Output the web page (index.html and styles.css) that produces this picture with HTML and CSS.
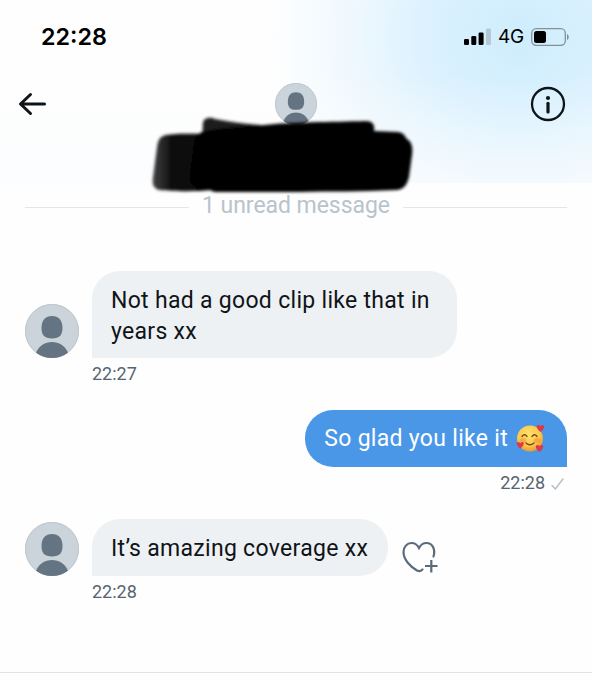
FILE: index.html
```html
<!DOCTYPE html>
<html lang="en">
<head>
    <meta charset="UTF-8">
    <meta name="viewport" content="width=device-width, initial-scale=1.0">
    <title>Messages</title>
    <link rel="stylesheet" href="styles.css">
</head>
<body>
    <svg class="symbols" width="0" height="0">
        <symbol id="person" viewBox="0 0 54 54">
            <circle cx="27" cy="27" r="27" fill="#ccd4db"/>
            <circle cx="27" cy="27" r="26.5" fill="none" stroke="#bcc6ce"/>
            <path d="M27 12C33.5 12 37.5 16 37.5 24C37.5 31 34.5 34.5 27 34.5S16.5 31 16.5 24C16.5 16 20.5 12 27 12Z" fill="#657482"/>
            <path d="M11 48.7C14 41.5 20 38 27 38S40 41.5 43 48.7A27 27 0 0 1 11 48.7Z" fill="#657482"/>
        </symbol>
        <symbol id="heart" viewBox="0 0 24 24">
            <path d="M12 21C7 17 2 12.5 2 7.5C2 2.5 8.5 1 12 6.2C15.5 1 22 2.5 22 7.5C22 12.5 17 17 12 21Z" fill="#df3949"/>
        </symbol>
    </svg>

    <header class="header">
        <div class="status-bar">
            <span class="clock">22:28</span>
            <div class="status-icons">
                <svg class="signal" width="27" height="17" viewBox="0 0 27 17">
                    <rect x="0" y="11" width="5" height="6" rx="1.3"/>
                    <rect x="7.3" y="8" width="5" height="9" rx="1.3"/>
                    <rect x="14.6" y="4.5" width="5" height="12.5" rx="1.3"/>
                    <rect x="22" y="0.5" width="5" height="16.5" rx="1.3" fill="#b5c8d4"/>
                </svg>
                <span class="network">4G</span>
                <svg class="battery" width="39" height="18" viewBox="0 0 39 18">
                    <rect x="0.7" y="0.7" width="33.6" height="16.6" rx="4.5" fill="none" stroke="#82929b" stroke-width="1.3"/>
                    <rect x="3" y="3" width="12" height="12" rx="2.5"/>
                    <path d="M36 6C38.3 7 38.3 11 36 12Z" fill="#82929b"/>
                </svg>
            </div>
        </div>
        <div class="nav">
            <svg class="back" width="29" height="24" viewBox="0 0 29 24" fill="none" stroke="#0f1419" stroke-width="3" stroke-linecap="round" stroke-linejoin="round">
                <path d="M26.5 12H3M12.5 2.500L2.500 12L12.500 21.500"/>
            </svg>
            <svg class="avatar-small" width="42" height="42"><use href="#person"/></svg>
            <svg class="info" width="36" height="36" viewBox="0 0 36 36">
                <circle cx="18" cy="18" r="16" fill="none" stroke="#0f1419" stroke-width="2.3"/>
                <circle cx="18" cy="12" r="2.1" fill="#0f1419"/>
                <path d="M18 17.3V26" stroke="#0f1419" stroke-width="3.2" stroke-linecap="round"/>
            </svg>
        </div>
        <!-- contact name, blacked out -->
        <svg class="redaction" width="270" height="84" viewBox="148 114 270 84">
            <defs>
                <filter id="soft" x="-10%" y="-10%" width="120%" height="120%">
                    <feGaussianBlur stdDeviation="1.5"/>
                </filter>
                <linearGradient id="ink" x1="0" x2="1">
                    <stop offset="0" stop-color="#444"/>
                    <stop offset="0.3" stop-color="#111"/>
                    <stop offset="1" stop-color="#000"/>
                </linearGradient>
            </defs>
            <g filter="url(#soft)">
                <path d="M163 136C172 133 190 134 206 134L212 190C192 192 171 191 159 190C153 188 152 184 153 177L157 147C158 141 159 138 163 136Z" fill="url(#ink)"/>
                <path d="M203 122C205 117 211 117 215 119C230 122 246 124 260 125L260 140H202Z" fill="#1c1c1c"/>
                <path d="M202 132C216 128 243 126 265 125C290 122 330 122 366 121C373 121 375 125 374 131L398 132C405 133 405 137 407 139C412 142 413 148 412 155L409 177C407 184 405 189 397 190C360 192 330 191 300 192L216 192C210 192 211 188 204 187C193 187 189 184 190 176L194 145C195 137 198 134 202 132Z"/>
            </g>
        </svg>
    </header>

    <main class="chat">
        <div class="unread"><span>1 unread message</span></div>

        <div class="message">
            <svg class="avatar" width="54" height="54"><use href="#person"/></svg>
            <p class="bubble wide">Not had a good clip like that in years xx</p>
        </div>
        <div class="time">22:27</div>

        <div class="message sent">
            <p class="bubble">
                <span>So glad you like it</span>
                <svg class="emoji" width="29" height="29" viewBox="0 0 29 29" role="img" aria-label="🥰">
                    <defs>
                        <radialGradient id="face" cx="0.45" cy="0.35" r="0.65">
                            <stop offset="0" stop-color="#ffe36c"/>
                            <stop offset="0.65" stop-color="#fbc94b"/>
                            <stop offset="1" stop-color="#e99a32"/>
                        </radialGradient>
                    </defs>
                    <circle cx="14" cy="14.5" r="13" fill="url(#face)"/>
                    <ellipse cx="7" cy="16.5" rx="3.5" ry="2.5" fill="#f08a3c" opacity="0.5"/>
                    <ellipse cx="21" cy="16.5" rx="3.5" ry="2.5" fill="#f08a3c" opacity="0.5"/>
                    <path d="M6 12.5Q8.500 9 11 12.5M16 12.5Q18.500 9 21 12.5M10 19Q14 22.500 18 19" fill="none" stroke="#7a431b" stroke-width="1.3" stroke-linecap="round"/>
                    <use href="#heart" x="20" y="0" width="9" height="9"/>
                    <use href="#heart" x="0" y="17" width="8.5" height="8.5"/>
                    <use href="#heart" x="19" y="20" width="9" height="9"/>
                </svg>
            </p>
        </div>
        <div class="time sent">
            22:28
            <svg width="13" height="12" viewBox="0 0 13 12" fill="none" stroke="#b4bec6" stroke-width="1.4" stroke-linecap="round">
                <path d="M1 7.500L4.300 11L12 1"/>
            </svg>
        </div>

        <div class="message">
            <svg class="avatar" width="54" height="54"><use href="#person"/></svg>
            <p class="bubble">It’s amazing coverage xx</p>
            <svg class="react" width="37" height="33" viewBox="0 0 37 33" fill="none" stroke="#5b6b7a" stroke-width="2.2" stroke-linecap="round">
                <path d="M31.500 15.500C34 7 29.500 2 24.500 2C21 2 18.500 4 17 7C15.500 4 13 2 9.500 2C5 2 1.500 6 1.500 11C1.500 19 9 26 15 29.500C17 30.500 19 30 20.500 28.500"/>
                <path d="M23 25H35.500M29.300 19V31.500" stroke-linecap="butt"/>
            </svg>
        </div>
        <div class="time">22:28</div>
    </main>
</body>
</html>
```

FILE: styles.css
```css
* {
    margin: 0;
    padding: 0;
    box-sizing: border-box;
}

body {
    display: flex;
    flex-direction: column;
    height: 680px;
    background: #fefefe;
    color: #0f1419;
    font-family: Roboto, "Liberation Sans", sans-serif;
    overflow: hidden;
}

svg {
    display: block;
    flex-shrink: 0;
}

.symbols {
    position: absolute;
}

.header {
    position: relative;
    height: 183px;
    background:
        linear-gradient(to bottom, rgba(254, 254, 254, 0) 40%, rgba(250, 252, 254, 0.6) 100%),
        radial-gradient(ellipse 250px 250px at 520px 35px, #cfedfd 0%, #daf1fe 35%, #eff8fe 68%, #fefefe 100%);
}

.status-bar {
    display: flex;
    justify-content: space-between;
    align-items: center;
    height: 73px;
    padding: 0 22px 0 41px;
}

.clock {
    font-family: Inter, sans-serif;
    font-size: 23.3px;
    font-weight: 600;
    color: #000;
}

.status-icons {
    display: flex;
    align-items: center;
}

.network {
    margin: 0 7px 0 7px;
    font-family: Inter, sans-serif;
    font-size: 19px;
    font-weight: 400;
    letter-spacing: -0.2px;
    color: #000;
}

.nav {
    display: grid;
    grid-template-columns: 1fr auto 1fr;
    align-items: center;
    height: 62px;
    padding: 0 26px 0 18px;
}

.avatar-small {
    margin-left: 8px;
}

.info {
    justify-self: end;
}

.redaction {
    position: absolute;
    left: 148px;
    top: 114px;
}

.chat {
    height: 490px;
    padding: 0 25px;
    border-bottom: 1px solid #dfe3e6;
}

.unread {
    display: flex;
    align-items: center;
    gap: 13px;
    height: 45px;
    margin-bottom: 43px;
    color: #b8c3cc;
    font-size: 23px;
    letter-spacing: -0.05px;
}

.unread::before,
.unread::after {
    content: "";
    flex: 1;
    height: 1px;
    margin-top: 4px;
    background: #e3e7ea;
}

.message {
    display: flex;
    align-items: flex-end;
    gap: 13px;
}

.message.sent {
    justify-content: flex-end;
}

.bubble {
    padding: 14px 20px 12px 19px;
    border-radius: 28px 28px 28px 0;
    background: #eef1f3;
    font-size: 23px;
    line-height: 31px;
    letter-spacing: 0.3px;
}

.bubble.wide {
    width: 365px;
    padding-bottom: 11px;
}

.sent .bubble {
    display: flex;
    align-items: center;
    gap: 8px;
    padding: 13px 22px 13px 19px;
    border-radius: 28px 28px 0 28px;
    background: #4a97e8;
    color: #fff;
}

.time {
    height: 52px;
    padding: 5px 0 0 67px;
    color: #566471;
    font-size: 18px;
    line-height: 22px;
}

.time.sent {
    display: flex;
    justify-content: flex-end;
    gap: 6px;
    padding-right: 3px;
}

.time svg {
    margin-top: 6px;
}

.react {
    margin: 0 0 2px 1px;
}
```
